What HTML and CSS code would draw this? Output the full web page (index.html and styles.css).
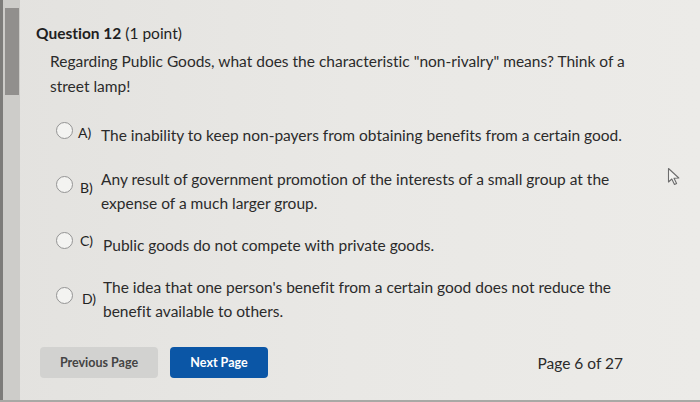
FILE: index.html
```html
<!DOCTYPE html>
<html lang="en">
<head>
  <meta charset="UTF-8">
  <title>Question 12</title>
  <link rel="stylesheet" href="styles.css">
</head>
<body>
  <div class="page">
    <!-- Scroll strip on the left -->
    <div class="scrollbar">
      <div class="scroll-thumb"></div>
    </div>

    <main class="quiz">
      <h2 class="question-title"><b>Question 12</b> (1 point)</h2>
      <p class="question-text">Regarding Public Goods, what does the characteristic "non-rivalry" means? Think of a street lamp!</p>

      <ul class="answers">
        <li class="answer answer-a">
          <span class="radio"></span>
          <span class="letter">A)</span>
          <span class="answer-text">The inability to keep non-payers from obtaining benefits from a certain good.</span>
        </li>
        <li class="answer answer-b">
          <span class="radio"></span>
          <span class="letter">B)</span>
          <span class="answer-text">Any result of government promotion of the interests of a small group at the expense of a much larger group.</span>
        </li>
        <li class="answer answer-c">
          <span class="radio"></span>
          <span class="letter">C)</span>
          <span class="answer-text">Public goods do not compete with private goods.</span>
        </li>
        <li class="answer answer-d">
          <span class="radio"></span>
          <span class="letter">D)</span>
          <span class="answer-text">The idea that one person's benefit from a certain good does not reduce the benefit available to others.</span>
        </li>
      </ul>

      <div class="nav">
        <button class="btn btn-prev">Previous Page</button>
        <button class="btn btn-next">Next Page</button>
        <span class="page-count">Page 6 of 27</span>
      </div>
    </main>

    <!-- Mouse pointer -->
    <svg class="cursor" width="14" height="19" viewBox="0 0 14 19">
      <path d="M1.5 1.5 L1.5 15 L4.8 12 L7.5 17.5 L9.6 16.5 L7 11.2 L11.8 11 Z" fill="#f4f4f2" stroke="#6d6d6d" stroke-width="1.1" stroke-linejoin="round"/>
    </svg>
  </div>
</body>
</html>
```

FILE: styles.css
```css
body {
  margin: 0;
  font-family: Lato, 'Open Sans', sans-serif;
  font-variant-ligatures: none;
  background-color: #e6e5e2;
  color: #2d3b45;
}

.page {
  position: relative;
  display: flex;
  width: 700px;
  height: 402px;
  overflow: hidden;
  background: linear-gradient(90deg, #e3e2df 0%, #e9e8e5 50%, #ecebe8 100%);
  border-bottom: 2px solid #a9a8a5;
  box-sizing: border-box;
}

/* Left scroll strip */
.scrollbar {
  width: 14px;
  flex-shrink: 0;
  background-color: #cdccc9;
  border-left: 3px solid #7d7c7a;
  padding: 8px 1px 0 2px;
}

.scroll-thumb {
  height: 87px;
  background-color: #918f8d;
}

.quiz {
  flex: 1;
  padding: 22px 0 0 16px;
}

.question-title {
  margin: 0;
  font-size: 15.5px;
  font-weight: normal;
  color: #1f1f1f;
  line-height: 22px;
}

.question-title b {
  font-weight: bold;
}

.question-text {
  margin: 5px 0 0 14px;
  width: 590px;
  font-size: 15.5px;
  line-height: 25px;
  color: #2b2b2b;
}

.answers {
  list-style: none;
  margin: 21px 0 0 0;
  padding: 0;
}

.answer {
  display: flex;
  align-items: flex-start;
  margin-left: 20px;
  font-size: 15.5px;
  line-height: 24px;
  color: #2b2b2b;
}

.radio {
  width: 15px;
  height: 15px;
  border: 1px solid #949494;
  border-radius: 50%;
  background-color: #f3f3f1;
  flex-shrink: 0;
}

.letter {
  width: 23px;
  margin-left: 5px;
  font-size: 14px;
  color: #222;
}

.answer-text {
  width: 540px;
}

/* Per-answer offsets: the letters sit a little off the text line */
.answer-a .radio {
  margin-top: 2px;
}

.answer-a .letter {
  margin-top: 1px;
}

.answer-a .answer-text {
  margin-top: 3px;
}

.answer-b {
  margin-top: 20px;
}

.answer-b .letter {
  margin-top: 9px;
  margin-left: 7px;
  width: 21px;
}

.answer-b .answer-text,
.answer-d .answer-text {
  width: 515px;
}

.answer-b .radio {
  margin-top: 9px;
}

.answer-c {
  margin-top: 14px;
}

.answer-c .radio {
  margin-top: 3px;
}

.answer-c .letter {
  margin-left: 7px;
}

.answer-c .answer-text {
  margin-top: 4px;
}

.answer-d {
  margin-top: 18px;
}

.answer-d .radio {
  margin-top: 12px;
}

.answer-d .letter {
  margin-top: 12px;
  margin-left: 9px;
  width: 21px;
}

/* Navigation row */
.nav {
  display: flex;
  align-items: center;
  margin-top: 24px;
  margin-left: 4px;
}

.btn {
  height: 31px;
  border: none;
  border-radius: 4px;
  font-family: Lato, sans-serif;
  font-size: 12.5px;
  font-weight: bold;
  cursor: pointer;
}

.btn-prev {
  width: 118px;
  background-color: #d2d2d0;
  color: #444444;
}

.btn-next {
  width: 98px;
  margin-left: 12px;
  background-color: #0b56a6;
  color: #ffffff;
}

.page-count {
  margin-left: auto;
  margin-right: 77px;
  margin-top: 1px;
  font-size: 15.5px;
  color: #2b2b2b;
}

.cursor {
  position: absolute;
  left: 667px;
  top: 167px;
}
```
